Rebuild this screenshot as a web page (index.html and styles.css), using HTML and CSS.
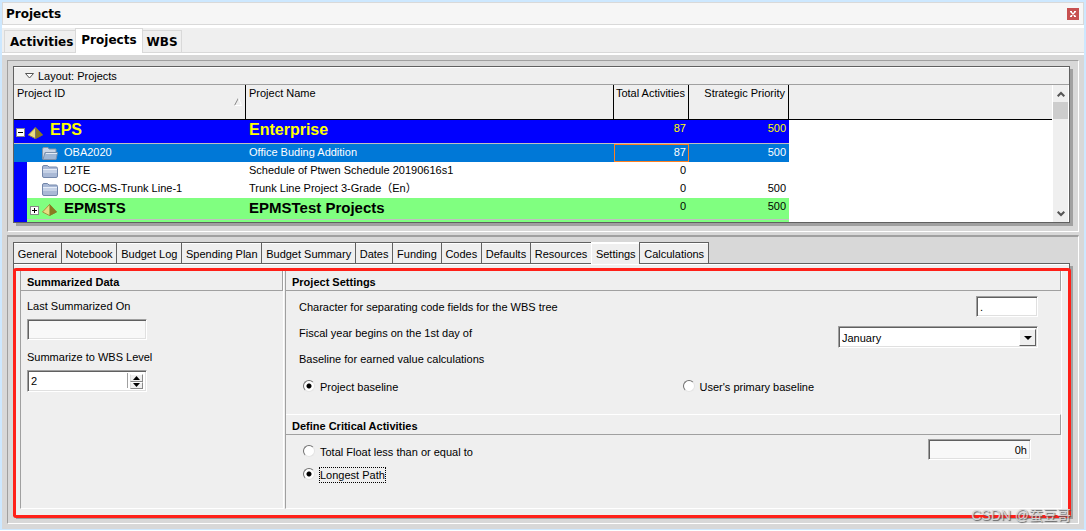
FILE: index.html
```html
<!DOCTYPE html>
<html lang="en">
<head>
<meta charset="utf-8">
<title>Projects</title>
<link rel="stylesheet" href="styles.css">
</head>
<body>
<svg class="defs" aria-hidden="true">
  <symbol id="folder" viewBox="0 0 16 13">
    <path d="M.500 2Q.500.500 2 .500H5.500l1.500 1.500H14q1.500 0 1.500 1.500v7.500q0 1.500-1.500 1.500H2q-1.500 0-1.500-1.500z" fill="#a9b9d6" stroke="#7286aa"/>
    <path d="M1 4.500h14" stroke="#e6edf8"/>
    <path d="M1 8V5h14v3z" fill="#c5d1e6"/>
  </symbol>
  <symbol id="folder-open" viewBox="0 0 16 13">
    <path d="M.500 2Q.500.500 2 .500H6l1 1.500h7v10H.500z" fill="#c9d5e6" stroke="#8195ab"/>
    <path d="M3 5.500H15.500L14 12.500H1z" fill="#9fb7d5" stroke="#7c92ae"/>
    <path d="M4 6.500h11" stroke="#e4edf7"/>
  </symbol>
  <symbol id="pyramid" viewBox="0 0 15 12">
    <path d="M7.500 0L0 8l7.500 4z" fill="#e8dc82"/>
    <path d="M7.500 0L15 8l-7.500 4z" fill="#8a7a20"/>
    <path d="M7.500 0.500L0.500 8l7 3.500 7-3.500z" fill="none" stroke="#857625" stroke-width="0.700"/>
  </symbol>
</svg>
<div class="window">
  <header class="titlebar">
    <h1>Projects</h1>
    <button class="close" aria-label="Close"><svg viewBox="0 0 6 6"><path d="M0 .500h2M4 .500h2M0 5.500h2M4 5.500h2M1 1l4 4M5 1L1 5" stroke="#fff" stroke-width="1.300"/></svg></button>
  </header>
  <nav class="main-tabs">
    <button>Activities</button><button class="active">Projects</button><button>WBS</button>
  </nav>
  <main class="workspace">
    <section class="upper">
      <div class="grid-pane">
        <button class="layout-bar"><svg viewBox="0 0 9 6"><path d="M.500.500h8L4.500 5z" fill="#fff" stroke="#555"/></svg>Layout: Projects</button>
        <div class="grid-body">
          <div class="table-area">
            <table>
              <colgroup><col class="c-id"><col class="c-name"><col class="c-total"><col class="c-prio"><col></colgroup>
              <thead>
                <tr><th><span class="sort-head">Project ID<svg viewBox="0 0 8 8"><path d="M.500 7.500L4.500 0" stroke="#888"/><path d="M4.500 0L7.500 7.500H.500" fill="none" stroke="#fff"/></svg></span></th><th>Project Name</th><th class="num">Total Activities</th><th class="num">Strategic Priority</th><th></th></tr>
              </thead>
              <tbody>
                <tr class="eps"><td><div class="root"><button class="toggle" aria-label="Collapse"><svg viewBox="0 0 9 9"><path d="M2 4.500h5" stroke="#000"/></svg></button><svg class="pyr"><use href="#pyramid"/></svg><b>EPS</b></div></td><td><b>Enterprise</b></td><td class="num">87</td><td class="num">500</td><td class="blank"></td></tr>
                <tr class="selected"><td><div class="branch"><svg class="fold"><use href="#folder-open"/></svg><span>OBA2020</span></div></td><td>Office Buding Addition</td><td class="num focus">87</td><td class="num">500</td><td class="blank"></td></tr>
                <tr><td><div class="branch"><svg class="fold"><use href="#folder"/></svg><span>L2TE</span></div></td><td>Schedule of Ptwen Schedule 20190616s1</td><td class="num">0</td><td class="num"></td><td class="blank"></td></tr>
                <tr><td><div class="branch"><svg class="fold"><use href="#folder"/></svg><span>DOCG-MS-Trunk Line-1</span></div></td><td>Trunk Line Project 3-Grade（En）</td><td class="num">0</td><td class="num">500</td><td class="blank"></td></tr>
                <tr class="sub"><td><div class="branch"><button class="toggle" aria-label="Expand"><svg viewBox="0 0 9 9"><path d="M2 4.500h5M4.500 2v5" stroke="#000"/></svg></button><svg class="pyr"><use href="#pyramid"/></svg><b>EPMSTS</b></div></td><td><b>EPMSTest Projects</b></td><td class="num">0</td><td class="num">500</td><td class="blank"></td></tr>
              </tbody>
            </table>
          </div>
          <div class="scrollbar">
            <button aria-label="Scroll up"><svg viewBox="0 0 8 6"><path d="M.700 5.300L4 2l3.300 3.300" fill="none" stroke="#555" stroke-width="2"/></svg></button>
            <span class="thumb"></span>
            <button aria-label="Scroll down"><svg viewBox="0 0 8 6"><path d="M.700.700L4 4 7.300.700" fill="none" stroke="#555" stroke-width="2"/></svg></button>
          </div>
        </div>
      </div>
    </section>
    <section class="lower">
      <nav class="detail-tabs">
        <button>General</button><button>Notebook</button><button>Budget Log</button><button>Spending Plan</button><button>Budget Summary</button><button>Dates</button><button>Funding</button><button>Codes</button><button>Defaults</button><button>Resources</button><button class="active">Settings</button><button>Calculations</button>
      </nav>
      <div class="detail-pane">
        <div class="summary">
          <h2>Summarized Data</h2>
          <div class="summary-form">
            <label for="last">Last Summarized On</label>
            <input id="last" class="field readonly" readonly>
            <label for="level">Summarize to WBS Level</label>
            <div class="field spin">
              <input id="level" value="2">
              <span class="arrows">
                <button aria-label="Increase"><svg viewBox="0 0 7 4"><path d="M0 4h7L3.500 0z"/></svg></button>
                <button aria-label="Decrease"><svg viewBox="0 0 7 4"><path d="M0 0h7L3.500 4z"/></svg></button>
              </span>
            </div>
          </div>
        </div>
        <div class="settings">
          <h2>Project Settings</h2>
          <div class="form project">
            <div class="row"><label for="sep">Character for separating code fields for the WBS tree</label><input id="sep" class="field sep" value="."></div>
            <div class="row fiscal"><label for="month">Fiscal year begins on the 1st day of</label>
              <div class="field combo"><select id="month"><option>January</option></select><span class="drop"><svg viewBox="0 0 8 4"><path d="M0 0h8L4 4z"/></svg></span></div></div>
            <div class="row base">Baseline for earned value calculations</div>
            <div class="radios">
              <label><input type="radio" name="baseline" checked><span>Project baseline</span></label>
              <label><input type="radio" name="baseline"><span>User's primary baseline</span></label>
            </div>
          </div>
          <h2>Define Critical Activities</h2>
          <div class="form critical">
            <div class="row"><label class="choice"><input type="radio" name="critical"><span>Total Float less than or equal to</span></label><input class="field readonly hours" aria-label="Total float" value="0h" readonly></div>
            <label class="choice"><input type="radio" name="critical" checked><span class="focused">Longest Path</span></label>
          </div>
        </div>
        <div class="highlight"></div>
      </div>
    </section>
  </main>
  <div class="watermark">CSDN @蚕豆哥</div>
</div>
</body>
</html>
```
FILE: styles.css
```css
* { box-sizing: border-box; }
body {
  margin: 0;
  background: #fff;
  color: #000;
  font: 11px/14px "Liberation Sans", "Noto Sans CJK SC", sans-serif;
}
button, input, select { font: inherit; color: inherit; margin: 0; padding: 0; border: 0; background: none; outline: 0; border-radius: 0; }
svg { display: block; flex: none; }
.defs { position: absolute; width: 0; height: 0; }
.window {
  position: relative;
  display: flex;
  flex-direction: column;
  min-height: calc(100vh - 1px);
  border: 2px solid #cde8ff;
  border-bottom-width: 1px;
}
.titlebar {
  display: flex;
  align-items: center;
  justify-content: space-between;
  height: 23px;
  padding: 0 4px 0 3px;
  border: 1px solid #d9d9d9;
  background: #f6f6f6;
}
h1, .main-tabs { font: bold 12px/16px "DejaVu Sans", sans-serif; }
h1 { margin: 0; }
.close { display: flex; align-items: center; justify-content: center; width: 12px; height: 12px; background: #c75050; }
.close svg { width: 6px; height: 6px; }
.main-tabs {
  display: flex;
  align-items: flex-end;
  margin-top: 3px;
  height: 25px;
  padding-left: 2px;
  background: #efefef;
  border-bottom: 1px solid #d9d9d9;
}
.main-tabs button { height: 22px; padding: 0 3px 0 5px; border: 1px solid #d9d9d9; border-width: 1px 1px 0 1px; }
.main-tabs button:first-child { padding-right: 2px; border-right: 0; }
.main-tabs button:last-child { padding-left: 4px; border-left: 0; }
.main-tabs .active { height: 25px; padding: 0 5px 3px; margin-bottom: -1px; background: #fff; }
.workspace {
  flex: 1;
  display: flex;
  flex-direction: column;
  margin-top: 2px;
  padding: 5px;
  background: #d8d8d8;
}
.upper, .lower { border: 1px solid #a0a0a0; border-right-color: #fff; border-bottom-color: #fff; padding: 5px 8px 0 5px; }
.upper { padding-bottom: 8px; }
.lower { flex: 1; display: flex; flex-direction: column; margin-top: 3px; border-top-width: 2px; padding-bottom: 7px; }
.grid-pane { border: 1px solid #606060; background: #fff; box-shadow: 3px 3px #a0a0a0; }
.layout-bar {
  display: flex;
  align-items: center;
  gap: 4px;
  width: 100%;
  height: 18px;
  padding-left: 11px;
  background: #efefef;
  border-top: 1px solid #fff;
  border-bottom: 1px solid #a0a0a0;
}
.layout-bar svg { width: 9px; height: 6px; }
.grid-body { display: flex; }
.table-area { flex: 1; min-width: 0; }
table { width: 100%; table-layout: fixed; border-collapse: separate; border-spacing: 0; }
.c-id { width: 232px; }
.c-name { width: 368px; }
.c-total { width: 75px; }
.c-prio { width: 100px; }
th {
  height: 35px;
  padding: 1px 3px 0;
  font-weight: normal;
  text-align: left;
  vertical-align: top;
  background: #efefef;
  border-right: 1px solid #000;
  border-bottom: 1px solid #000;
  white-space: nowrap;
}
th:last-child { border-right: 0; }
.sort-head { display: flex; justify-content: space-between; }
.sort-head svg { width: 8px; height: 8px; margin-top: 12px; }
th.num { text-align: right; padding-left: 0; }
td { height: 18px; padding: 0 3px; font-size: 11px; line-height: 16px; vertical-align: top; white-space: nowrap; }
td:first-child { padding: 0; }
td b { font-size: 16px; line-height: 20px; }
.num { text-align: right; }
.root, .branch { display: flex; align-items: center; }
.eps td { height: 23px; background: #00f; color: #ff0; }
.root { height: 23px; padding-left: 2px; }
.root b { padding: 0 0 3px 7px; }
.toggle { width: 9px; height: 9px; border: 1px solid #888; background: #fff; }
.toggle svg { width: 9px; height: 9px; margin: -1px; }
.root .pyr { margin: 3px 0 0 3px; }
.root .toggle { margin-top: 2px; }
.pyr { width: 15px; height: 12px; }
.branch { height: 18px; border-left: 13px solid #00f; padding-left: 15px; gap: 6px; }
.branch span { padding-bottom: 2px; }
.fold { width: 16px; height: 13px; }
.selected td { height: 19px; border-top: 1px solid #c0c0c0; background: #0078d7; color: #fff; }
.selected .branch { border-left-color: #0078d7; }
td.focus { box-shadow: inset 0 0 0 1px #ff8020; }
.sub td { height: 24px; background: linear-gradient(#c0c0c0, #c0c0c0) 0 21px / 100% 1px no-repeat #80ff80; }
.sub b { font-size: 15px; }
.sub .branch { height: 24px; padding-left: 3px; gap: 0; }
.sub .pyr { margin-left: 3px; }
.sub .branch b { padding: 0 0 5px 7px; }
tr td.blank { background: #fff; border-color: #fff; }
.scrollbar { display: flex; flex-direction: column; align-items: center; width: 17px; background: #efefef; border-left: 1px solid #fff; border-right: 1px solid #fff; }
.scrollbar button { display: flex; align-items: center; justify-content: center; width: 100%; height: 17px; }
.scrollbar svg { width: 8px; height: 6px; }
.thumb { width: 100%; height: 17px; background: #cdcdcd; margin-bottom: auto; }

.detail-tabs { display: flex; height: 21px; width: 100%; max-width: 696px; }
.detail-tabs button { flex: 1 1 auto; padding: 1px 3px 0; background: #efefef; border: 1px solid #606060; border-width: 1px 0 0 1px; white-space: nowrap; box-shadow: inset 0 1px #fff; }
.detail-tabs button:last-child { border-right-width: 1px; }
.detail-tabs .active { margin-bottom: -1px; border-left-color: #fff; border-top-color: #fff; position: relative; z-index: 1; padding-bottom: 1px; }
.detail-pane {
  flex: 1;
  display: flex;
  position: relative;
  padding: 6px 7px 6px 6px;
  border: 1px solid #606060;
  background: #efefef;
  box-shadow: inset 0 1px #fff, 3px 3px #a0a0a0;
}
.highlight { position: absolute; inset: 4px -2px -3px -1px; border: 3px solid #ff2018; border-radius: 3px; pointer-events: none; }
.summary { width: 264px; border-left: 1px solid #a0a0a0; border-right: 1px solid #fff; border-bottom: 1px solid #fff; }
.settings { flex: 1; margin-left: 1px; border-left: 1px solid #a0a0a0; border-right: 1px solid #fff; border-bottom: 1px solid #fff; display: flex; flex-direction: column; }
h2 { margin: 0; height: 21px; padding: 4px 6px 0; font: bold 11px/14px "Liberation Sans", sans-serif; border-top: 1px solid #fff; border-right: 1px solid #a0a0a0; border-bottom: 1px solid #a0a0a0; }
.summary-form { display: flex; flex-direction: column; align-items: flex-start; padding: 8px 6px; }
.field { height: 21px; border: 1px solid #a0a0a0; border-right-color: #fff; border-bottom-color: #fff; background: #fff; box-shadow: inset 1px 1px #606060, inset -1px -1px #e0e0e0; padding: 2px 3px; }
.readonly { background: #f8f8f8; }
.summary-form .field { width: 120px; }
#last { margin: 6px 0 10px; }
.spin { display: flex; margin-top: 6px; height: 22px; }
.spin input { flex: 1; min-width: 0; border-right: 1px solid #a0a0a0; height: 15px; }
.arrows { display: flex; flex-direction: column; margin-left: 2px; padding-top: 1px; }
.arrows button { display: flex; align-items: center; justify-content: center; width: 13px; height: 8px; background: #efefef; border: 1px solid; border-color: #fff #888 #888 #ddd; }
.arrows svg { width: 7px; height: 4px; }
.form { padding: 5px 23px 0 13px; }
.project { height: 123px; }
.row { display: flex; justify-content: space-between; align-items: center; }
.sep { width: 62px; }
.fiscal { margin-top: 9px; align-items: flex-start; }
.combo { display: flex; width: 200px; height: 22px; padding: 2px 1px 1px 2px; }
.combo select { flex: 1; appearance: none; padding-left: 1px; }
.drop { display: flex; align-items: center; justify-content: center; width: 17px; height: 17px; background: #efefef; border: 1px solid; border-color: #fff #606060 #606060 #fff; }
.drop svg { width: 8px; height: 4px; }
.base { margin-top: 4px; }
.radios { display: grid; grid-template-columns: 1fr 1fr; padding: 14px 0 0 4px; margin-right: -24px; }
.radios label, .choice { display: flex; align-items: center; gap: 5px; }
input[type="radio"] { appearance: none; width: 12px; height: 12px; margin-bottom: 2px; border: 1px solid; border-color: #707070 #e4e4e4 #e4e4e4 #707070; border-radius: 50%; background: #fff; }
input[type="radio"]:checked { background: radial-gradient(circle, #000 0 2px, #fff 3px); }
.critical { padding: 4px 30px 0 17px; }
.critical .row .choice { padding-top: 5px; }
.hours { width: 103px; text-align: right; }
.critical > .choice { padding-top: 8px; }
.focused { outline: 1px dotted #000; outline-offset: 0; }
.watermark { position: absolute; right: 13px; bottom: 4px; font: 14px/20px "Liberation Sans", "Noto Sans CJK SC", sans-serif; color: #d8d8d8; text-shadow: 1px 1px 1px #555; opacity: 0.9; white-space: nowrap; }
```
